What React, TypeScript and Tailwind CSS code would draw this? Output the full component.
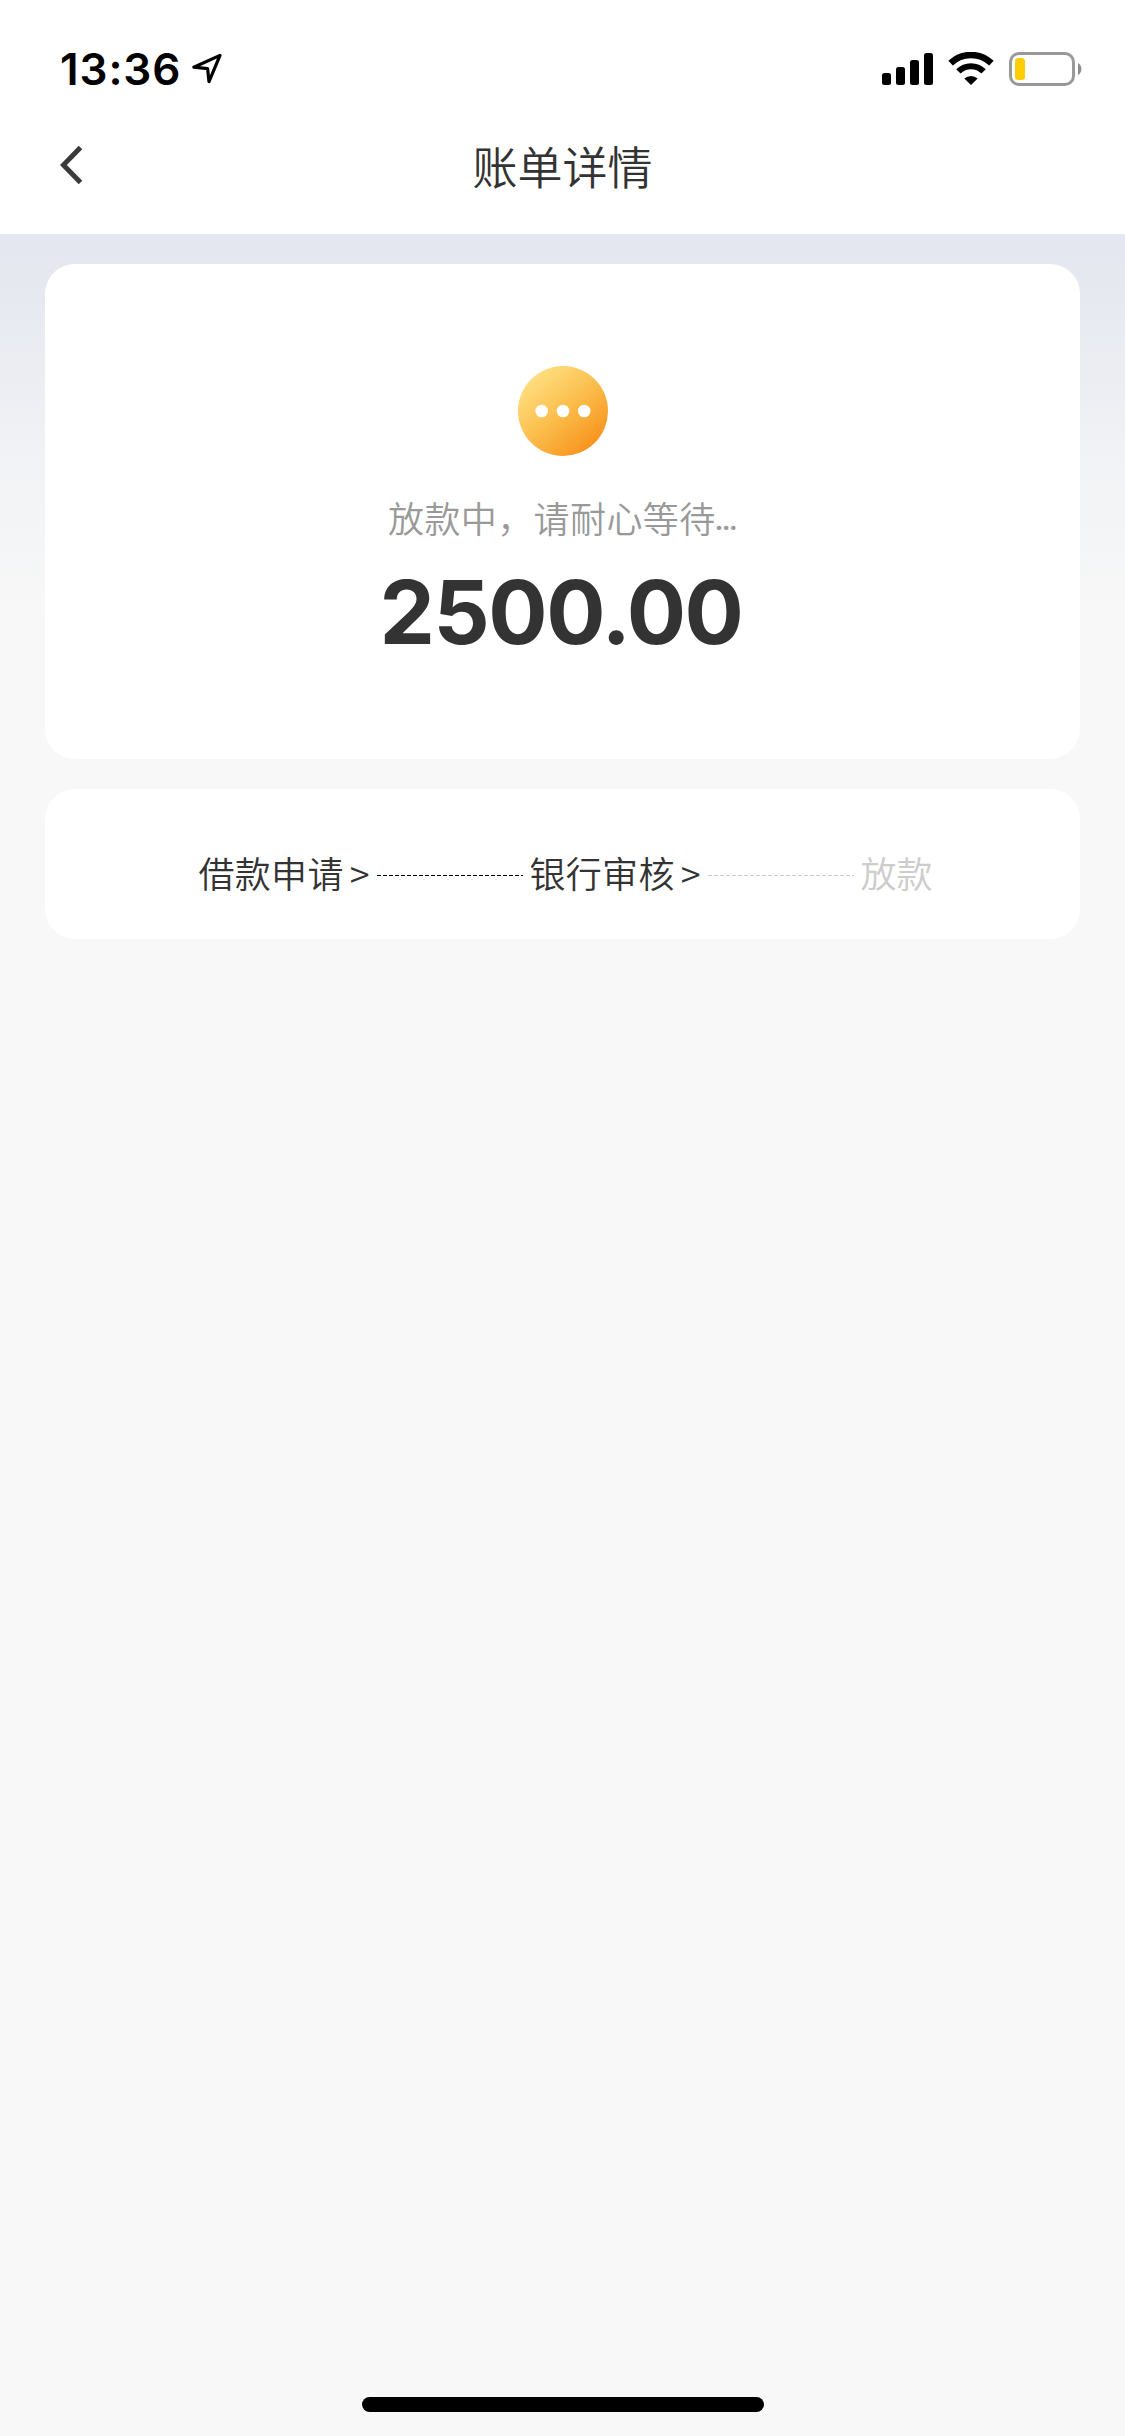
import { Fragment } from "react";

const steps = [
  { label: "借款申请", done: true },
  { label: "银行审核", done: true },
  { label: "放款", done: false },
];

function StatusBar() {
  return (
    <div className="flex h-[132px] items-start justify-between pt-[46px] pr-[40px] pl-[60px]">
      <div className="flex">
        <span className="font-['Inter'] text-[44px] leading-[46px] font-semibold tracking-[0.9px] text-black">
          13:36
        </span>
        <svg
          className="mt-[7px] ml-[10px]"
          width="32"
          height="32"
          viewBox="0 0 32 32"
          fill="none"
          stroke="#000"
          strokeWidth="3.2"
          strokeLinejoin="round"
        >
          <path d="M29 2.4 L2.8 14.2 L16.6 15.6 L18 28.6 Z" />
        </svg>
      </div>
      <div className="flex items-start pt-[6px]">
        <svg width="52" height="34" viewBox="0 0 52 34" fill="#000">
          <rect x="0" y="21" width="9" height="12" rx="2.5" />
          <rect x="14" y="15" width="9" height="18" rx="2.5" />
          <rect x="28" y="8" width="9" height="25" rx="2.5" />
          <rect x="42" y="1" width="9" height="32" rx="2.5" />
        </svg>
        <svg className="ml-[14px]" width="46" height="34" viewBox="0 0 46 34">
          <path
            d="M2.6 11.2 A29.5 29.5 0 0 1 43.4 11.2"
            fill="none"
            stroke="#000"
            strokeWidth="6.5"
          />
          <path
            d="M10.4 19.4 A18 18 0 0 1 35.6 19.4"
            fill="none"
            stroke="#000"
            strokeWidth="6.2"
          />
          <path d="M23 33 L16.3 26.5 A10 10 0 0 1 29.7 26.5 Z" fill="#000" />
        </svg>
        <svg className="ml-[15px]" width="76" height="36" viewBox="0 0 76 36">
          <rect
            x="1.5"
            y="1.5"
            width="63"
            height="31"
            rx="8.5"
            fill="none"
            stroke="#999"
            strokeWidth="3"
          />
          <rect x="6" y="6" width="10" height="22" rx="3.5" fill="#fc0" />
          <path d="M69 11 A7 7 0 0 1 69 23 Z" fill="#8c8c8c" />
        </svg>
      </div>
    </div>
  );
}

function PendingIcon() {
  return (
    <svg width="90" height="90" viewBox="0 0 90 90">
      <defs>
        <linearGradient id="pending" x1="0.15" y1="0.1" x2="0.85" y2="0.92">
          <stop offset="0" stopColor="#ffe082" />
          <stop offset="0.5" stopColor="#fbbd4b" />
          <stop offset="1" stopColor="#f7911a" />
        </linearGradient>
      </defs>
      <circle cx="45" cy="45" r="45" fill="url(#pending)" />
      <circle cx="23.7" cy="45" r="6.3" fill="#fff" />
      <circle cx="45" cy="45" r="6.3" fill="#fff" />
      <circle cx="66.2" cy="45" r="6.3" fill="#fff" />
    </svg>
  );
}

export default function App() {
  return (
    <div className="flex h-[2436px] w-[1125px] flex-col overflow-hidden bg-[#f8f8f8] font-['Noto_Sans_CJK_SC',sans-serif] font-[350] text-[#333]">
      <header className="h-[234px] bg-white">
        <StatusBar />
        <div className="grid h-[69px] grid-cols-[1fr_auto_1fr] items-center px-[60px]">
          <svg
            className="-mt-[4px]"
            width="24"
            height="40"
            viewBox="0 0 24 40"
            fill="none"
            stroke="#3a3a3a"
            strokeWidth="5"
          >
            <path d="M20.5 2.5 L3.4 20 L20.5 37.5" />
          </svg>
          <h1 className="-mt-[2px] text-[45px] leading-[66px] font-[350]">账单详情</h1>
        </div>
      </header>

      <main className="flex flex-1 flex-col gap-[30px] bg-[linear-gradient(180deg,#e4e7ef_0px,#e7e9f1_65px,#f0f2f5_220px,#f8f8f8_380px)] px-[45px] pt-[30px]">
        <section className="flex h-[495px] flex-col items-center rounded-[30px] bg-white pt-[102px]">
          <PendingIcon />
          <p className="mt-[34px] flex h-[54px] text-[36px] leading-[54px] tracking-[0.4px] text-[#999]">
            放款中，请耐心等待
            <span className="font-['Noto_Sans'] text-[25px] font-bold leading-[61px] tracking-normal">
              …
            </span>
          </p>
          <p className="mt-[14px] mr-[3px] font-['Inter'] text-[88px] leading-[108px] font-bold tracking-[-1.5px]">
            2500.00
          </p>
        </section>

        <section className="flex h-[150px] items-center justify-center rounded-[30px] bg-white pt-[15px] pl-[6px] text-[36px] leading-[54px]">
          {steps.map((step, i) => (
            <Fragment key={step.label}>
              <span className={step.done ? "tracking-[0.3px]" : "text-[#ccc]"}>
                {step.label}
              </span>
              {i < steps.length - 1 ? (
                <>
                  <span className="ml-[6px]">&gt;</span>
                  <span
                    className={
                      steps[i + 1].done
                        ? "mt-[7px] mr-[6px] ml-[8px] h-px w-[146px] bg-[repeating-linear-gradient(90deg,#000_0_4px,transparent_4px_6px)]"
                        : "mt-[7px] mr-[6px] ml-[8px] h-px w-[146px] bg-[repeating-linear-gradient(90deg,#ccc_0_4px,transparent_4px_6px)]"
                    }
                  />
                </>
              ) : null}
            </Fragment>
          ))}
        </section>
      </main>

      <footer className="flex h-[39px] shrink-0 justify-center">
        <div className="h-[15px] w-[402px] rounded-full bg-black" />
      </footer>
    </div>
  );
}
